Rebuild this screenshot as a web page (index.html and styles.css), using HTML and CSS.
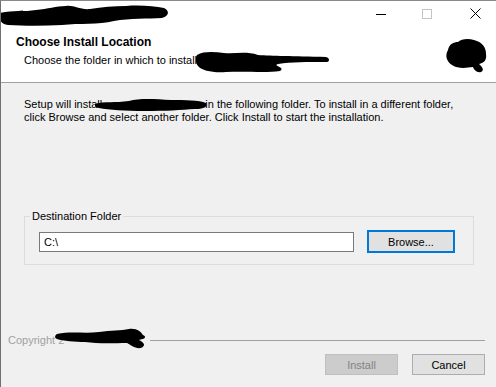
FILE: index.html
```html
<!DOCTYPE html>
<html lang="en">
<head>
    <meta charset="UTF-8">
    <title>Setup</title>
    <link rel="stylesheet" href="styles.css">
</head>
<body>
    <div class="window">
        <div class="titlebar">
            <div class="title-space"></div>
            <div class="ctl"><svg width="10" height="10" viewBox="0 0 10 10"><path d="M0 5.5h10" stroke="#000" stroke-width="1"/></svg></div>
            <div class="ctl"><svg width="10" height="10" viewBox="0 0 10 10"><rect x="0.5" y="0.5" width="9" height="9" fill="none" stroke="#c4c4c4"/></svg></div>
            <div class="ctl ctl-close"><svg width="11" height="11" viewBox="0 0 11 11"><path d="M0.5 0.5l10 10M10.5 0.5l-10 10" stroke="#000" stroke-width="1"/></svg></div>
        </div>
        <div class="header">
            <div class="header-text">
                <div class="header-title">Choose Install Location</div>
                <div class="header-sub">Choose the folder in which to install</div>
            </div>
        </div>
        <div class="content">
            <p class="intro">Setup will install <span class="gap-a"></span>in the following folder. To install in a different folder,<br>click Browse and select another folder. Click Install to start the installation.</p>
            <fieldset class="group">
                <legend>Destination Folder</legend>
                <div class="dest-row">
                    <div class="path-box">C:\</div>
                    <button class="btn btn-focus">Browse...</button>
                </div>
            </fieldset>
        </div>
        <div class="footer">
            <div class="brand-row">
                <span class="brand">Copyright 2</span>
                <span class="brand-line"></span>
            </div>
            <div class="btn-row">
                <button class="btn btn-disabled">Install</button>
                <button class="btn">Cancel</button>
            </div>
        </div>

        <!-- redaction marks -->
        <svg class="mark mark-title" width="170" height="24" viewBox="0 0 170 24"><path d="M0 9 C12 6 24 8 36 6 C48 5 56 2 66 2 C74 1 80 6 90 5 C102 3 114 2 126 2 C140 1 154 2 164 4 C170 7 169 12 162 14 C148 15 130 14 114 17 C98 21 80 19 62 21 C44 22 24 22 8 21 C0 20 -1 15 0 9 Z" fill="#000"/></svg>
        <svg class="mark mark-sub" width="134" height="24" viewBox="0 0 134 24"><path d="M1 5 C8 1 18 2 28 3 C40 4 50 1 62 5 C76 6 96 6 130 7 C134 8 134 12 130 12 C110 12 96 12 82 14 C76 16 90 17 84 21 C70 23 50 21 30 22 C18 23 6 21 2 16 C-1 12 -1 8 1 5 Z" fill="#000"/></svg>
        <svg class="mark mark-logo" width="44" height="36" viewBox="0 0 44 36"><path d="M4 12 C5 6 10 4 14 4 C17 1 24 0 30 2 C38 4 42 9 42 16 C43 22 40 25 35 26 C38 29 41 32 37 34 C33 35 30 32 29 29 C22 30 14 31 8 27 C2 23 1 17 4 12 Z" fill="#000"/></svg>
        <svg class="mark mark-intro" width="112" height="14" viewBox="0 0 112 14"><path d="M0 6 C10 3 20 5 34 3 C44 0 60 1 76 2 C90 2 104 2 111 5 C113 8 110 11 100 11 C86 12 70 13 50 13 C30 13 14 12 4 10 C0 9 -1 7 0 6 Z" fill="#000"/></svg>
        <svg class="mark mark-copy" width="92" height="22" viewBox="0 0 92 22"><path d="M2 6 C16 3 30 6 44 4 C56 2 66 3 74 1 C82 0 86 4 88 7 C92 9 90 11 84 12 C88 14 92 17 86 20 C80 21 76 17 72 15 C60 15 44 16 30 14 C20 14 8 13 2 11 C-1 10 0 7 2 6 Z" fill="#000"/></svg>
    </div>
</body>
</html>
```

FILE: styles.css
```css
* {
    box-sizing: border-box;
}
body {
    margin: 0;
    font-family: "Liberation Sans", Arial, sans-serif;
    font-size: 11px;
    color: #000;
    background: #f0f0f0;
}
.window {
    position: relative;
    width: 496px;
    height: 387px;
    border-left: 1px solid #707070;
    border-top: 1px solid #8a8a8a;
    background: #f0f0f0;
    overflow: hidden;
}
.titlebar {
    display: flex;
    height: 29px;
    background: #fff;
}
.title-space {
    flex: 1;
}
.ctl {
    width: 46px;
    display: flex;
    align-items: center;
    justify-content: center;
    padding-bottom: 4px;
}
.ctl-close {
    padding-left: 4px;
}
.header {
    height: 53px;
    background: #fff;
    border-bottom: 1px solid #a0a0a0;
}
.header-text {
    padding: 5px 0 0 15px;
}
.header-title {
    font-weight: bold;
    font-size: 12px;
    line-height: 14px;
}
.header-sub {
    padding: 4px 0 0 8px;
    line-height: 14px;
}
.content {
    padding: 15px 22px 0 23px;
}
.intro {
    margin: 0;
    line-height: 13px;
}
.gap-a {
    display: inline-block;
    width: 100px;
}
.group {
    margin: 86px 0 0 0;
    padding: 8px 14px 11px 14px;
    border: 1px solid #dcdcdc;
    border-radius: 0;
    min-width: 0;
}
.group legend {
    padding: 0 2px;
    margin-left: -9px;
    line-height: 12px;
}
.dest-row {
    display: flex;
    align-items: center;
    gap: 13px;
}
.path-box {
    width: 315px;
    height: 20px;
    border: 1px solid #7a7a7a;
    background: #fff;
    padding: 2px 0 0 4px;
    line-height: 14px;
}
.btn {
    font-family: inherit;
    font-size: 11px;
    width: 73px;
    height: 21px;
    padding: 0;
    border: 1px solid #adadad;
    background: #e1e1e1;
    color: #000;
}
.btn-focus {
    width: 88px;
    height: 23px;
    border: 2px solid #0078d7;
}
.btn-disabled {
    background: #cccccc;
    border-color: #bfbfbf;
    color: #838383;
}
.footer {
    position: absolute;
    left: 0;
    right: 0;
    bottom: 0;
    padding: 0 11px 12px 7px;
}
.brand-row {
    display: flex;
    align-items: center;
    gap: 6px;
}
.brand {
    color: #a0a0a0;
    line-height: 13px;
}
.brand-line {
    flex: 1;
    margin-left: 80px;
    border-top: 1px solid #a0a0a0;
}
.btn-row {
    display: flex;
    justify-content: flex-end;
    gap: 14px;
    margin-top: 7px;
}
.mark {
    position: absolute;
}
.mark-title {
    left: -1px;
    top: 3px;
}
.mark-sub {
    left: 195px;
    top: 49px;
}
.mark-logo {
    left: 443px;
    top: 37px;
}
.mark-intro {
    left: 94px;
    top: 97px;
}
.mark-copy {
    left: 54px;
    top: 327px;
}
```
